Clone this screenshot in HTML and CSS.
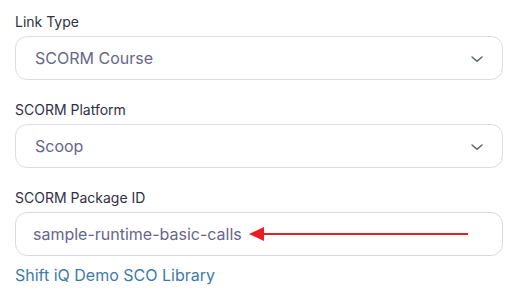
FILE: index.html
```html
<!DOCTYPE html>
<html lang="en">
<head>
  <meta charset="UTF-8">
  <title>SCORM Link</title>
  <link rel="stylesheet" href="styles.css">
</head>
<body>

  <form class="link-form">
    <div class="field">
      <label class="field-label">Link Type</label>
      <div class="select-box">
        <span>SCORM Course</span>
        <svg class="chevron" width="14" height="8" viewBox="0 0 14 8"><path d="M2 2 L7 6.3 L12 2" fill="none" stroke="#555b6b" stroke-width="1.4" stroke-linecap="round" stroke-linejoin="round"/></svg>
      </div>
    </div>

    <div class="field">
      <label class="field-label">SCORM Platform</label>
      <div class="select-box">
        <span>Scoop</span>
        <svg class="chevron" width="14" height="8" viewBox="0 0 14 8"><path d="M2 2 L7 6.3 L12 2" fill="none" stroke="#555b6b" stroke-width="1.4" stroke-linecap="round" stroke-linejoin="round"/></svg>
      </div>
    </div>

    <div class="field">
      <label class="field-label">SCORM Package ID</label>
      <div class="text-box">
        <span>sample-runtime-basic-calls</span>
        <!-- red callout arrow -->
        <svg class="callout" width="222" height="16" viewBox="0 0 222 16">
          <line x1="14" y1="8" x2="220" y2="8" stroke="#ec1c24" stroke-width="2.2"/>
          <polygon points="1,8 16,1 16,15" fill="#ec1c24"/>
        </svg>
      </div>
      <a class="library-link" href="#">Shift iQ Demo SCO Library</a>
    </div>
  </form>

</body>
</html>
```

FILE: styles.css
```css
body {
  margin: 0;
  font-family: Inter, 'Noto Sans', sans-serif;
  background-color: #fff;
  color: #2f2f45;
}

.link-form {
  width: 488px;
  margin-left: 15px;
  padding-top: 12px;
}

.field {
  margin-bottom: 20px;
}

.field-label {
  display: block;
  font-size: 14px;
  line-height: 20px;
  color: #2f2f45;
  margin-bottom: 4px;
}

.select-box, .text-box {
  position: relative;
  box-sizing: border-box;
  height: 44px;
  border: 1px solid #dddbe8;
  border-radius: 12px;
  display: flex;
  align-items: center;
  justify-content: space-between;
  padding: 0 18px 0 19px;
  font-size: 16px;
  color: #66678a;
}

.text-box {
  border-color: #d6dbe2;
  padding-left: 17px;
}

.chevron {
  display: block;
  margin-top: 1px;
}

.callout {
  position: absolute;
  left: 232px;
  top: 13px;
}

.library-link {
  display: block;
  margin-top: 7px;
  font-size: 16px;
  line-height: 24px;
  color: #3b7baa;
  text-decoration: none;
}
```
